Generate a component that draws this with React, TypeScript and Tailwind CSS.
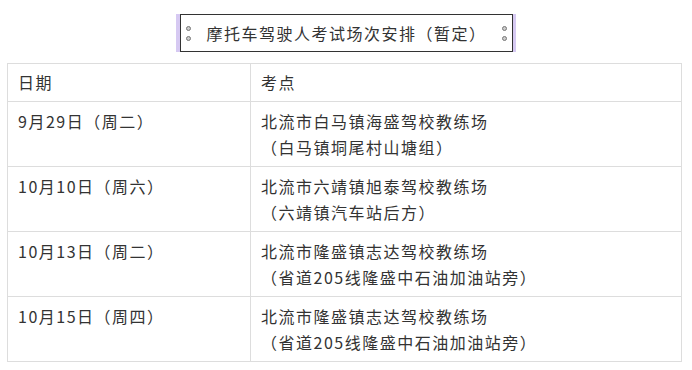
const rows: { date: string; place: string; note: string }[] = [
  { date: '9月29日（周二）', place: '北流市白马镇海盛驾校教练场', note: '（白马镇垌尾村山塘组）' },
  { date: '10月10日（周六）', place: '北流市六靖镇旭泰驾校教练场', note: '（六靖镇汽车站后方）' },
  { date: '10月13日（周二）', place: '北流市隆盛镇志达驾校教练场', note: '（省道205线隆盛中石油加油站旁）' },
  { date: '10月15日（周四）', place: '北流市隆盛镇志达驾校教练场', note: '（省道205线隆盛中石油加油站旁）' },
];

function Dots() {
  return (
    <div className="flex flex-col gap-[5px]">
      <span className="h-[5px] w-[5px] rounded-full border border-[#777] bg-[#ccc]" />
      <span className="h-[5px] w-[5px] rounded-full border border-[#777] bg-[#ccc]" />
    </div>
  );
}

export default function App() {
  return (
    <div
      className="h-[370px] w-[692px] bg-white pt-[14px] text-[16px] tracking-[1.5px] text-[#333]"
      style={{ fontFamily: '"Noto Sans CJK SC", "Noto Sans", sans-serif' }}
    >
      <div className="flex justify-center">
        <div className="flex border-l-[4px] border-r-[3px] border-[#d6c9f2]">
          <div className="flex h-[38px] w-[333px] items-center justify-between border border-[#333] px-[5px]">
            <Dots />
            <span className="leading-none text-[#333]">摩托车驾驶人考试场次安排（暂定）</span>
            <Dots />
          </div>
        </div>
      </div>

      <table className="ml-[7px] mt-[11px] w-[675px] table-fixed border-collapse">
        <colgroup>
          <col className="w-[243px]" />
          <col />
        </colgroup>
        <thead>
          <tr>
            <th className="border border-[#ddd] px-[10px] py-[6px] text-left font-normal leading-[25px]">日期</th>
            <th className="border border-[#ddd] px-[10px] py-[6px] text-left font-normal leading-[25px]">考点</th>
          </tr>
        </thead>
        <tbody>
          {rows.map((r, i) => (
            <tr key={i}>
              <td className="border border-[#ddd] px-[10px] py-[6px] align-top leading-[26px]">{r.date}</td>
              <td className="border border-[#ddd] px-[10px] py-[6px] align-top leading-[26px]">
                <div>{r.place}</div>
                <div>{r.note}</div>
              </td>
            </tr>
          ))}
        </tbody>
      </table>
    </div>
  );
}
